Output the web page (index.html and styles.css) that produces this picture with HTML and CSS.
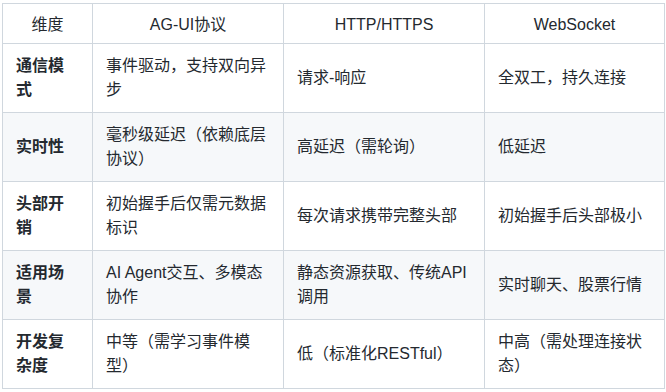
FILE: index.html
```html
<!DOCTYPE html>
<html lang="zh-CN">
<head>
    <meta charset="UTF-8">
    <meta name="viewport" content="width=device-width, initial-scale=1.0">
    <title>协议对比</title>
    <link rel="stylesheet" href="styles.css">
</head>
<body>
    <table class="compare">
        <thead>
            <tr>
                <th class="col-dim">维度</th>
                <th class="col-agui">AG-UI协议</th>
                <th class="col-http">HTTP/HTTPS</th>
                <th class="col-ws">WebSocket</th>
            </tr>
        </thead>
        <tbody>
            <tr>
                <td class="dim">通信模式</td>
                <td>事件驱动，支持双向异步</td>
                <td>请求-响应</td>
                <td>全双工，持久连接</td>
            </tr>
            <tr>
                <td class="dim">实时性</td>
                <td>毫秒级延迟（依赖底层协议）</td>
                <td>高延迟（需轮询）</td>
                <td>低延迟</td>
            </tr>
            <tr>
                <td class="dim">头部开销</td>
                <td>初始握手后仅需元数据标识</td>
                <td>每次请求携带完整头部</td>
                <td>初始握手后头部极小</td>
            </tr>
            <tr>
                <td class="dim">适用场景</td>
                <td>AI Agent交互、多模态协作</td>
                <td>静态资源获取、传统API调用</td>
                <td>实时聊天、股票行情</td>
            </tr>
            <tr>
                <td class="dim">开发复杂度</td>
                <td>中等（需学习事件模型）</td>
                <td>低（标准化RESTful）</td>
                <td>中高（需处理连接状态）</td>
            </tr>
        </tbody>
    </table>
</body>
</html>
```

FILE: styles.css
```css
body {
    margin: 0;
    padding: 3px 2px;
    background: #ffffff;
    font-family: "Liberation Sans", "Noto Sans CJK SC", sans-serif;
    font-size: 16px;
    line-height: 24px;
    color: #24292f;
}
.compare {
    border-collapse: collapse;
    table-layout: fixed;
    width: 662px;
}
.compare th,
.compare td {
    box-sizing: border-box;
    border: 1px solid #d0d7de;
    padding: 10px 13px;
    text-align: left;
    vertical-align: middle;
}
.compare th {
    padding: 9px 13px 6px;
    font-weight: normal;
    text-align: center;
}
.compare tbody tr:nth-child(2n) {
    background: #f6f8fa;
}
.compare .dim {
    font-weight: bold;
}
.col-dim {
    width: 90px;
}
.col-agui {
    width: 191px;
}
.col-http {
    width: 201px;
}
.col-ws {
    width: 180px;
}
```
